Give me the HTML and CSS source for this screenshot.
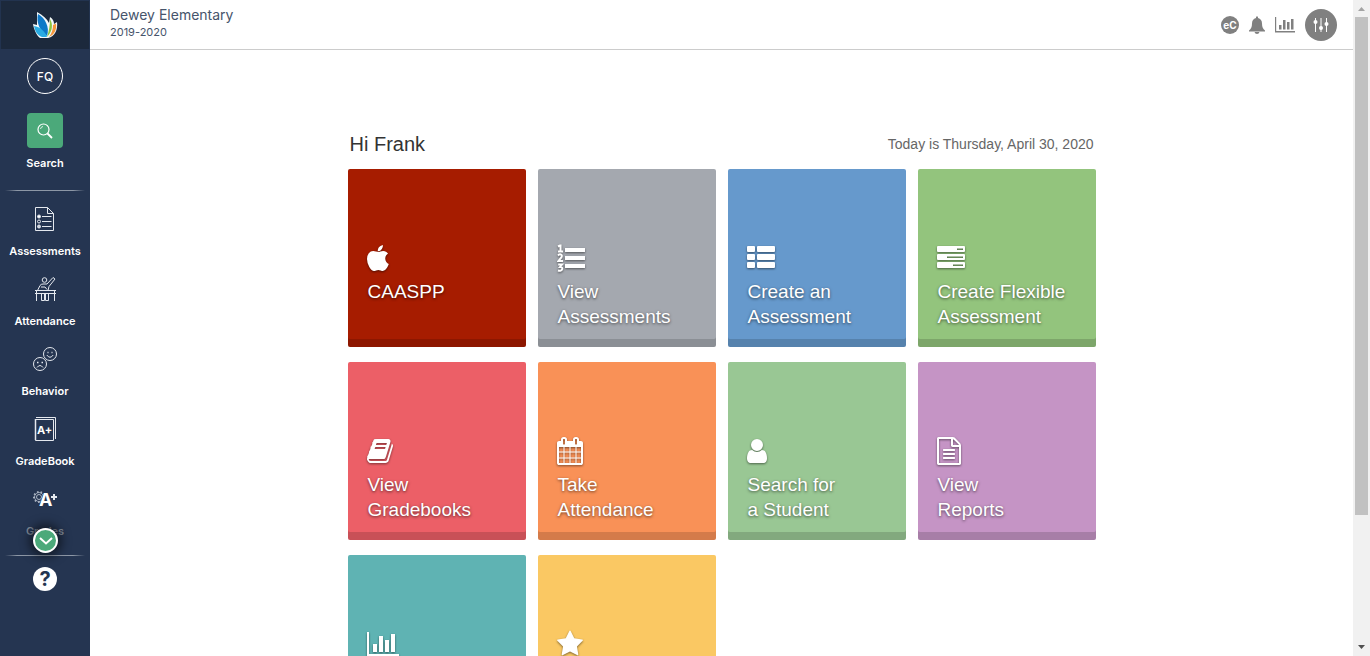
FILE: index.html
```html
<!DOCTYPE html>
<html lang="en">
<head>
<meta charset="utf-8">
<title>Dewey Elementary</title>
<link rel="stylesheet" href="styles.css">
</head>
<body>
<div class="app">
  <nav class="sidebar">
    <a class="logo" href="#" aria-label="Home">
      <svg width="26" height="28" viewBox="0 0 26 28">
        <path d="M5 1C11 4 15 8 17 12L18 6C21 8 22 10 22 13L25 11C26 18 23 26 16 27H8C4 24 2 18 1 13L5 14Z" fill="#f4f8fa"/>
        <path d="M21 14L24 12.500C25 19 22 24 17 26C20 22 21 18 21 14Z" fill="#f6963c"/>
        <path d="M18 8C21 13 21 20 15 26C17 20 18 14 18 8Z" fill="#8cc63f"/>
        <path d="M6 3C13 7 18 16 15 25C8 20 4 12 6 3Z" fill="#0d78c8"/>
        <path d="M2 15C8 16 13 20 15 26H10C5 24 3 20 2 15Z" fill="#29abe2"/>
      </svg>
    </a>
    <button class="avatar">FQ</button>
    <button class="search">
      <span class="search-box">
        <svg width="18" height="18" viewBox="0 0 18 18" fill="none" stroke="#fff"><circle cx="7.500" cy="7.500" r="5.500" stroke-width="1.200"/><path d="M4.500 7A3 3 0 0 1 7 4.500" stroke-width=".8"/><path d="M11.500 11.500L16 16" stroke-width="1.800"/></svg>
      </span>
      <span class="label">Search</span>
    </button>
    <div class="rule"></div>
    <div class="menu">
      <a class="item" href="#">
        <svg class="glyph" viewBox="0 0 28 28"><path d="M4.500 2.500H16.500L22.500 8.500V25.500H4.500ZM16.500 2.500V8.500H22.500M11 11.500H20.500M11 16.500H20.500M11 21.500H20.500"/><circle cx="8" cy="11.500" r="1.500" fill="#fff"/><circle cx="8" cy="16.500" r="1.500"/><circle cx="8" cy="21.500" r="1.500" fill="#cdd3dc"/></svg>
        <span class="label">Assessments</span>
      </a>
      <a class="item" href="#">
        <svg class="glyph" viewBox="0 0 28 28"><circle cx="13.500" cy="5" r="2.300"/><path d="M6.500 15.500L9 10.500Q10 9 12 9H16L22 2.500L24 4L18 11.500L17 15.500M10 12H14L16 14.500M4 15.500H25M4 18.500H25M5.500 15.500V26M23.500 15.500V26M10.500 18.500V25.500H13.500V18.500M14.500 18.500V25.500H17.500V18.500"/></svg>
        <span class="label">Attendance</span>
      </a>
      <a class="item" href="#">
        <svg class="glyph" viewBox="0 0 28 28"><circle cx="19" cy="9" r="6.500"/><circle cx="9" cy="19" r="6.500" fill="#253551"/><path d="M15.800 10Q19 14.500 22.200 10M6 22.500Q9 18.500 12 22.500"/><path d="M16.500 7.500H17.500M20.500 7.500H21.500M6 17.500H7.500M10.500 17.500H12" stroke-width="1.500"/></svg>
        <span class="label">Behavior</span>
      </a>
      <a class="item" href="#">
        <svg class="glyph" viewBox="0 0 28 28"><path d="M4.500 4.500H22.500V25.500H4.500ZM5 2.500H24.500V24"/><path d="M4.500 4V25" stroke-width="1.500"/><text x="6" y="19" font-size="11">A+</text></svg>
        <span class="label">GradeBook</span>
      </a>
      <a class="item faded" href="#">
        <svg class="glyph" viewBox="0 0 28 28"><g stroke="#aeb8c6"><circle cx="8" cy="12" r="5" stroke-width="2" stroke-dasharray="1.500 2"/><circle cx="8" cy="12" r="4.500" stroke-width=".8"/><circle cx="8" cy="12" r="2.500"/></g><path d="M8 22L13 6H17L21 22Z" fill="#253551" stroke="none"/><text x="8" y="21" font-size="18">A</text><path d="M20 12H26M23 9V15" stroke-width="2"/></svg>
        <span class="label">Grades</span>
      </a>
      <button class="more" aria-label="More"><svg width="16" height="10" viewBox="0 0 16 10" fill="none" stroke="#fff" stroke-width="2"><path d="M2 2L8 7.500L14 2"/></svg></button>
    </div>
    <div class="rule"></div>
    <button class="help">?</button>
  </nav>

  <div class="page">
    <header class="topbar">
      <div class="school">
        <div class="school-name">Dewey Elementary</div>
        <div class="school-year">2019-2020</div>
      </div>
      <div class="tools">
        <button class="tool ec">eC</button>
        <button class="tool" aria-label="Notifications"><svg width="16" height="18" viewBox="0 0 16 18" fill="#808080"><path d="M7 1Q8-.5 9 1V2Q13 3 13 7.500Q13 12.500 16 14.500V15.500H0V14.500Q3 12.500 3 7.500Q3 3 7 2ZM5.500 16H10.500Q10 18 8 18T5.500 16Z"/></svg></button>
        <button class="tool" aria-label="Charts"><svg width="20" height="16" viewBox="0 0 20 16" fill="#808080"><path d="M0 0H1.200V14H20V15.500H0ZM4 8H6.500V12.500H4ZM8 3H10.500V12.500H8ZM12 5H14.500V12.500H12ZM16 2H18.500V12.500H16Z"/></svg></button>
        <button class="tool settings" aria-label="Settings"><svg width="18" height="18" viewBox="0 0 18 18" fill="#fff" stroke="#fff"><path d="M3.500 2V16M9 2V16M14.500 2V16" fill="none" stroke-width="1"/><g stroke="none"><circle cx="3.500" cy="6" r="2"/><circle cx="9" cy="12" r="2"/><circle cx="14.500" cy="8" r="2"/></g></svg></button>
      </div>
    </header>
    <main class="main">
      <div class="greeting">
        <h1>Hi Frank</h1>
        <p>Today is Thursday, April 30, 2020</p>
      </div>
      <div class="tiles">
        <a class="tile red" href="#">
          <svg class="icon" viewBox="192 -64 2048 1792"><path d="M1585 1215q-39 125-123 250-129 196-257 196-49 0-140-32-86-32-151-32-61 0-142 33-81 34-132 34-152 0-301-259-147-261-147-503 0-228 113-374 113-144 284-144 72 0 177 30 104 30 138 30 45 0 143-34 102-34 173-34 119 0 213 65 52 36 104 100-79 67-114 118-65 94-65 207 0 124 69 223t158 126zm-376-1173q0 61-29 136-30 75-93 138-54 54-108 72-37 11-104 17 3-149 78-257 74-107 250-148 1 3 2.500 11t2.500 11q0 4 .5 10t.5 10z"/></svg>
          <span class="tile-text">CAASPP</span>
        </a>
        <a class="tile gray" href="#">
          <svg class="icon" viewBox="0 0 32 28"><path d="M8 4H28V8H8ZM8 12H28V16H8ZM8 20H28V24H8Z"/><path d="M1 2.500L3 1.500H3.500V7.500M1 7.500H6M1 11.500Q3 9.500 4.500 11Q5.500 12.500 3.500 14.500L1.500 17H6M1.200 20.500H5L3 23Q5.500 23 5.200 25Q4.500 27.500 1 26.500" fill="none" stroke="#fff" stroke-width="2"/></svg>
          <span class="tile-text">View<br>Assessments</span>
        </a>
        <a class="tile blue" href="#">
          <svg class="icon" viewBox="0 0 32 28"><rect y="2" width="8" height="6" rx="1"/><rect x="10" y="2" width="18" height="6" rx="1"/><rect y="10" width="8" height="6" rx="1"/><rect x="10" y="10" width="18" height="6" rx="1"/><rect y="18" width="8" height="6" rx="1"/><rect x="10" y="18" width="18" height="6" rx="1"/></svg>
          <span class="tile-text">Create an<br>Assessment</span>
        </a>
        <a class="tile green" href="#">
          <svg class="icon" viewBox="0 0 32 28" fill-rule="evenodd"><path d="M1 2H27Q28 2 28 3V7Q28 8 27 8H1Q0 8 0 7V3Q0 2 1 2ZM20 4.500V6H26V4.500ZM1 10H27Q28 10 28 11V15Q28 16 27 16H1Q0 16 0 15V11Q0 10 1 10ZM10 12.500V14H26V12.500ZM1 18H27Q28 18 28 19V23Q28 24 27 24H1Q0 24 0 23V19Q0 18 1 18ZM16 20.500V22H26V20.500Z"/></svg>
          <span class="tile-text">Create Flexible<br>Assessment</span>
        </a>
        <a class="tile pink" href="#">
          <svg class="icon" viewBox="64 0 2048 1792"><path d="M1703 478q40 57 18 129l-275 906q-19 64-76.500 107.500t-122.500 43.500h-923q-77 0-148.500-53.500t-99.500-131.500q-24-67-2-127 0-4 3-27t4-37q1-8-3-21.500t-3-19.500q2-11 8-21t16.500-23.500 16.500-23.500q23-38 45-91.500t30-91.500q3-10 .5-30t-.5-28q3-11 17-28t17-23q21-36 42-92t25-90q1-9-2.500-32t.5-28q4-13 22-30.500t22-22.500q19-26 42.500-84.500t27.500-96.500q1-8-3-25.500t-2-26.500q2-8 9-18t18-23 17-21q8-12 16.500-30.500t15-35 16-36 19.500-32 26.500-23.500 36-11.500 47.500 5.500l-1 3q38-9 51-9h761q74 0 114 56t18 130l-274 906q-36 119-71.500 153.500t-128.500 34.500h-869q-27 0-38 15-11 16-1 43 24 70 144 70h923q29 0 56-15.500t35-41.500l300-987q7-22 5-57 38 15 59 43zm-1064 2q-4 13 2 22.500t20 9.500h608q13 0 25.500-9.500t16.500-22.500l21-64q4-13-2-22.500t-20-9.500h-608q-13 0-25.500 9.500t-16.500 22.500zm-83 256q-4 13 2 22.500t20 9.500h608q13 0 25.500-9.500t16.500-22.500l21-64q4-13-2-22.500t-20-9.500h-608q-13 0-25.500 9.500t-16.500 22.500z"/></svg>
          <span class="tile-text">View<br>Gradebooks</span>
        </a>
        <a class="tile orange" href="#">
          <svg class="icon" viewBox="64 0 2048 1792"><path d="M192 1664h288v-288h-288v288zm352 0h320v-288h-320v288zm-352-352h288v-320h-288v320zm352 0h320v-320h-320v320zm-352-384h288v-288h-288v288zm736 736h320v-288h-320v288zm-384-736h320v-288h-320v288zm768 736h288v-288h-288v288zm-384-352h320v-320h-320v320zm-352-864v-288q0-13-9.500-22.500t-22.500-9.500h-64q-13 0-22.500 9.500t-9.500 22.500v288q0 13 9.500 22.500t22.500 9.500h64q13 0 22.500-9.500t9.500-22.500zm736 864h288v-320h-288v320zm-384-384h320v-288h-320v288zm384 0h288v-288h-288v288zm32-480v-288q0-13-9.500-22.500t-22.500-9.500h-64q-13 0-22.500 9.500t-9.500 22.500v288q0 13 9.500 22.500t22.500 9.500h64q13 0 22.500-9.500t9.500-22.500zm384-64v1280q0 52-38 90t-90 38h-1408q-52 0-90-38t-38-90v-1280q0-52 38-90t90-38h128v-96q0-66 47-113t113-47h64q66 0 113 47t47 113v96h384v-96q0-66 47-113t113-47h64q66 0 113 47t47 113v96h128q52 0 90 38t38 90z"/></svg>
          <span class="tile-text">Take<br>Attendance</span>
        </a>
        <a class="tile mint" href="#">
          <svg class="icon" viewBox="256 0 2048 1792"><path d="M1536 1399q0 109-62.500 187t-150.500 78h-854q-88 0-150.500-78t-62.500-187q0-85 8.500-160.500t31.500-152 58.500-131 94-89 134.500-34.500q131 128 313 128t313-128q76 0 134.500 34.500t94 89 58.500 131 31.500 152 8.500 160.500zm-256-887q0 159-112.500 271.500t-271.500 112.500-271.500-112.500-112.500-271.500 112.500-271.500 271.500-112.500 271.500 112.500 112.500 271.500z"/></svg>
          <span class="tile-text">Search for<br>a Student</span>
        </a>
        <a class="tile purple" href="#">
          <svg class="icon" viewBox="128 0 2048 1792"><path d="M1596 380q28 28 48 76t20 88v1152q0 40-28 68t-68 28h-1344q-40 0-68-28t-28-68v-1600q0-40 28-68t68-28h896q40 0 88 20t76 48zm-444-244v376h376q-10-29-22-41l-313-313q-12-12-41-22zm384 1528v-1024h-416q-40 0-68-28t-28-68v-416h-768v1536h1280zm-1024-864q0-14 9-23t23-9h704q14 0 23 9t9 23v64q0 14-9 23t-23 9h-704q-14 0-23-9t-9-23v-64zm736 224q14 0 23 9t9 23v64q0 14-9 23t-23 9h-704q-14 0-23-9t-9-23v-64q0-14 9-23t23-9h704zm0 256q14 0 23 9t9 23v64q0 14-9 23t-23 9h-704q-14 0-23-9t-9-23v-64q0-14 9-23t23-9h704z"/></svg>
          <span class="tile-text">View<br>Reports</span>
        </a>
        <a class="tile teal" href="#" aria-label="Charts">
          <svg class="icon" viewBox="0 0 2048 1792"><path d="M640 896v512h-256v-512h256zm384-512v1024h-256v-1024h256zm1024 1152v128h-2048v-1536h128v1408h1920zm-640-896v768h-256v-768h256zm384-384v1152h-256v-1152h256z"/></svg>
        </a>
        <a class="tile yellow" href="#" aria-label="Favorites">
          <svg class="icon" viewBox="64 0 2048 1792"><path d="M1728 647q0 22-26 48l-363 354 86 500q1 7 1 20 0 21-10.500 35.500t-30.500 14.500q-19 0-40-12l-449-236-449 236q-22 12-40 12-21 0-31.500-14.500t-10.500-35.500q0-6 2-20l86-500-364-354q-25-27-25-48 0-37 56-46l502-73 225-455q19-41 49-41t49 41l225 455 502 73q56 9 56 46z"/></svg>
        </a>
      </div>
    </main>
  </div>

  <div class="scrollbar">
    <svg class="arrow" viewBox="0 0 17 17"><path d="M5 11L8.500 7L12 11Z" fill="#a3a3a3"/></svg>
    <div class="track"><div class="thumb"></div></div>
    <svg class="arrow" viewBox="0 0 17 17"><path d="M5 6H12L8.500 10Z" fill="#505050"/></svg>
  </div>
</div>
</body>
</html>
```
FILE: styles.css
```css
* { box-sizing: border-box; }
body {
  margin: 0;
  background: #fff;
  font-family: "Liberation Sans", Arial, sans-serif;
}
button {
  padding: 0;
  border: 0;
  background: none;
  color: inherit;
  font: inherit;
  cursor: pointer;
}
a { color: inherit; text-decoration: none; }
svg { display: block; flex: none; }

.app {
  display: grid;
  grid-template-columns: 90px 1fr 17px;
  height: 100vh;
  overflow: hidden;
}

.sidebar {
  display: flex;
  flex-direction: column;
  align-items: center;
  background: #253551;
  color: #fff;
  font-family: Inter, sans-serif;
}
.logo {
  display: grid;
  place-items: center;
  width: 100%;
  height: 49px;
  border: 1px solid #22334f;
  border-bottom: 0;
  background: #1c293c;
}
.avatar {
  width: 36px;
  height: 36px;
  margin-top: 9px;
  border: 1px solid #fff;
  border-radius: 50%;
  font-size: 12px;
  font-weight: 500;
}
.search {
  display: flex;
  flex-direction: column;
  align-items: center;
  gap: 7px;
  margin: 19px 0;
}
.search-box {
  display: grid;
  place-items: center;
  width: 36px;
  height: 35px;
  border-radius: 4px;
  background: #4ba97a;
}
.label {
  font-size: 11px;
  font-weight: 600;
  line-height: 16px;
}
.rule {
  width: 80px;
  height: 1px;
  background: linear-gradient(90deg, transparent, #8d97a6 15%, #8d97a6 85%, transparent);
}
.menu {
  position: relative;
  display: flex;
  flex-direction: column;
  gap: 16px;
  width: 100%;
  padding: 14px 0 16px;
}
.item {
  display: flex;
  flex-direction: column;
  align-items: center;
  gap: 10px;
}
.glyph {
  width: 28px;
  height: 28px;
  fill: none;
  stroke: #e4e8ee;
  stroke-width: 1;
}
.glyph text {
  fill: #fff;
  stroke: none;
  font-family: Inter, sans-serif;
  font-weight: 700;
}
.faded .label { color: #7f8997; }
.more {
  position: absolute;
  bottom: 2px;
  left: 50%;
  display: grid;
  place-items: center;
  width: 25px;
  height: 25px;
  margin-left: -12px;
  border: 2px solid #fff;
  border-radius: 50%;
  background: #4ba97a;
  box-shadow: 0 0 10px 4px rgba(0, 0, 0, .5);
}
.help {
  width: 24px;
  height: 24px;
  margin-top: 11px;
  border-radius: 50%;
  background: #fff;
  color: #253551;
  font-size: 20px;
  font-weight: 700;
  line-height: 24px;
}

.page {
  display: flex;
  flex-direction: column;
  min-width: 0;
  min-height: 0;
}
.topbar {
  display: flex;
  flex: none;
  align-items: center;
  justify-content: space-between;
  height: 50px;
  padding: 0 16px 0 20px;
  border-bottom: 1px solid #ccc;
}
.school {
  padding-bottom: 4px;
  color: #46546b;
  font-family: Inter, sans-serif;
}
.school-name { font-size: 14px; line-height: 18px; }
.school-year { font-size: 11px; line-height: 16px; }
.tools {
  display: flex;
  align-items: center;
  gap: 10px;
}
.tool {
  display: grid;
  place-items: center;
}
.ec {
  width: 18px;
  height: 18px;
  border-radius: 50%;
  background: #808080;
  color: #fff;
  font-family: Inter, sans-serif;
  font-size: 10px;
  font-weight: 700;
}
.settings {
  width: 32px;
  height: 32px;
  border-radius: 50%;
  background: #808080;
}

.main {
  flex: 1;
  min-height: 0;
  overflow: hidden;
  padding-top: 79px;
}
.greeting {
  display: flex;
  align-items: center;
  justify-content: space-between;
  width: 748px;
  max-width: 100%;
  margin: 0 auto 10px;
  padding: 0 2px;
}
.greeting h1 {
  margin: 0;
  color: #333;
  font-size: 20px;
  font-weight: 400;
  line-height: 30px;
}
.greeting p {
  margin: 0;
  color: #666;
  font-size: 14px;
}
.tiles {
  display: grid;
  grid-template-columns: repeat(auto-fill, 178px);
  gap: 15px 12px;
  width: 748px;
  max-width: 100%;
  margin: 0 auto;
}
.tile {
  display: flex;
  flex-direction: column;
  gap: 7px;
  min-height: 178px;
  padding: 75px 19px 18px;
  border-radius: 2px;
  box-shadow: inset 0 -8px rgba(0, 0, 0, .15);
  color: #fff;
  font-size: 19px;
  line-height: 25px;
  text-shadow: 0 1px 3px rgba(0, 0, 0, .6);
}
.tile-text { padding-left: 1px; }
.icon {
  width: 32px;
  height: 28px;
  fill: #fff;
  filter: drop-shadow(0 1px 1px rgba(0, 0, 0, .5));
}
.red { background: #a61c00; }
.gray { background: #a4a8af; }
.blue { background: #6699cc; }
.green { background: #93c47d; }
.pink { background: #ec5f67; }
.orange { background: #f99157; }
.mint { background: #99c794; }
.purple { background: #c594c5; }
.teal { background: #5fb3b3; }
.yellow { background: #fac863; }

.scrollbar {
  display: flex;
  flex-direction: column;
  background: #f1f1f1;
}
.arrow { width: 17px; height: 17px; }
.track {
  flex: 1;
  padding: 0 2px;
}
.thumb {
  height: 80%;
  background: #c1c1c1;
}
```
